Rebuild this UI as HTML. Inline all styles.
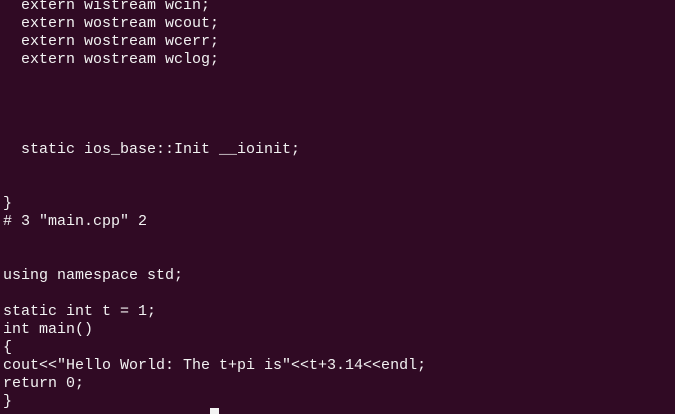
<!DOCTYPE html>
<html><head><style>
html,body{margin:0;padding:0;width:675px;height:412px;overflow:hidden;background:#300a24;}
pre{position:absolute;left:3px;top:-3px;margin:0;font-family:"Liberation Mono","DejaVu Sans Mono",monospace;font-size:15px;line-height:18px;color:#f2f2f2;}
.cur{position:absolute;left:210px;top:408px;width:9px;height:6px;background:#f2f2f2;}
</style></head><body>
<pre>  extern wistream wcin;
  extern wostream wcout;
  extern wostream wcerr;
  extern wostream wclog;




  static ios_base::Init __ioinit;


}
# 3 "main.cpp" 2


using namespace std;

static int t = 1;
int main()
{
cout&lt;&lt;"Hello World: The t+pi is"&lt;&lt;t+3.14&lt;&lt;endl;
return 0;
}</pre>
<div class="cur"></div>
</body></html>
